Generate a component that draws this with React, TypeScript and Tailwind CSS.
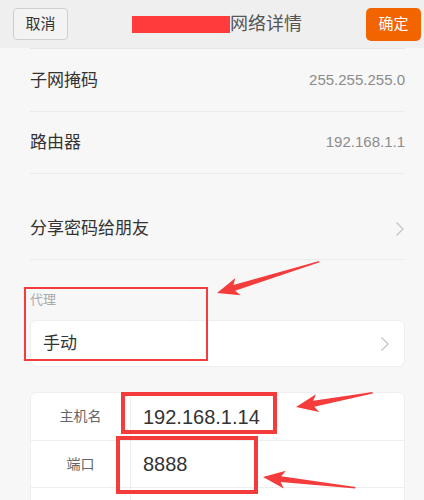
const font = { fontFamily: '"Liberation Sans", "Noto Sans CJK SC", sans-serif' };

const Chevron = () => (
  <svg width="10" height="16" viewBox="0 0 10 16" fill="none">
    <path d="M1.5 1.5 L8 8 L1.5 14.5" stroke="#c4c4c4" strokeWidth="1.3" />
  </svg>
);

// tip at (0,0), pointing left, rotated around the tip
const Arrow = ({ x, y, angle, len }: { x: number; y: number; angle: number; len: number }) => (
  <polygon
    points={`0,0 22,-9 18,-3 ${len},-1 ${len},0.5 18,3 22,9`}
    fill="#f53c3c"
    transform={`translate(${x} ${y}) rotate(${angle})`}
  />
);

const InfoRow = ({ label, value }: { label: string; value: string }) => (
  <div className="flex h-[62px] items-center justify-between border-b border-[#ebebeb]">
    <span className="text-[17px] text-[#333]">{label}</span>
    <span className="text-[15px] text-[#8c8c8c]">{value}</span>
  </div>
);

export default function App() {
  return (
    <div className="relative h-[500px] w-[424px] overflow-hidden bg-[#f7f7f7]" style={font}>
      {/* header */}
      <div className="flex h-[48px] items-center justify-between bg-[#efefef] pl-[13px] pr-[3px]">
        <button className="h-[32px] w-[55px] rounded-[4px] border border-[#cfcfcf] bg-[#f3f3f3] text-[15px] text-[#333]">
          取消
        </button>
        <div className="flex items-center">
          <div className="h-[17px] w-[98px] bg-[#ff3b3b]" />
          <span className="text-[18px] text-[#555]">网络详情</span>
        </div>
        <button className="h-[33px] w-[55px] rounded-[5px] bg-[#f26400] text-[15px] text-white">
          确定
        </button>
      </div>

      <div className="pl-[30px] pr-[19px]">
        <div className="border-t border-[#e6e6e6] pt-[1px]">
          <InfoRow label="子网掩码" value="255.255.255.0" />
          <InfoRow label="路由器" value="192.168.1.1" />
        </div>

        <div className="mt-[24px] flex h-[62px] items-center justify-between border-b border-[#ebebeb]">
          <span className="text-[17px] text-[#333]">分享密码给朋友</span>
          <Chevron />
        </div>

        <div className="pt-[31px] text-[13px] leading-[18px] text-[#aaa]">代理</div>
        <div className="mt-[11px] flex h-[47px] items-center justify-between rounded-[6px] border border-[#eeeeee] bg-white pl-[12px] pr-[14px]">
          <span className="text-[17px] text-[#333]">手动</span>
          <Chevron />
        </div>

        <div className="mt-[25px] overflow-hidden rounded-[6px] border border-[#eeeeee] bg-white">
          <div className="flex h-[48px] border-b border-[#eeeeee]">
            <div className="flex w-[100px] items-center justify-center border-r border-[#eeeeee] text-[14px] text-[#666]">主机名</div>
            <div className="flex items-center pl-[12px] text-[20px] text-[#333]">192.168.1.14</div>
          </div>
          <div className="flex h-[47px] border-b border-[#eeeeee]">
            <div className="flex w-[100px] items-center justify-center border-r border-[#eeeeee] text-[14px] text-[#666]">端口</div>
            <div className="flex items-center pl-[12px] text-[20px] text-[#333]">8888</div>
          </div>
          <div className="flex h-[47px]">
            <div className="w-[100px] border-r border-[#eeeeee]" />
            <div />
          </div>
        </div>
      </div>

      {/* annotations */}
      <div className="absolute left-[24px] top-[287px] h-[74px] w-[184px] border-2 border-[#f53c3c]" />
      <div className="absolute left-[121px] top-[392px] h-[42px] w-[156px] border-[4px] border-[#f53c3c]" />
      <div className="absolute left-[116px] top-[436px] h-[58px] w-[142px] border-[4px] border-[#f53c3c]" />
      <svg className="absolute left-0 top-0" width="424" height="500">
        <Arrow x={217} y={293} angle={-16.9} len={107} />
        <Arrow x={296} y={407} angle={-10.4} len={78} />
        <Arrow x={263} y={477} angle={6.8} len={93} />
      </svg>
    </div>
  );
}
